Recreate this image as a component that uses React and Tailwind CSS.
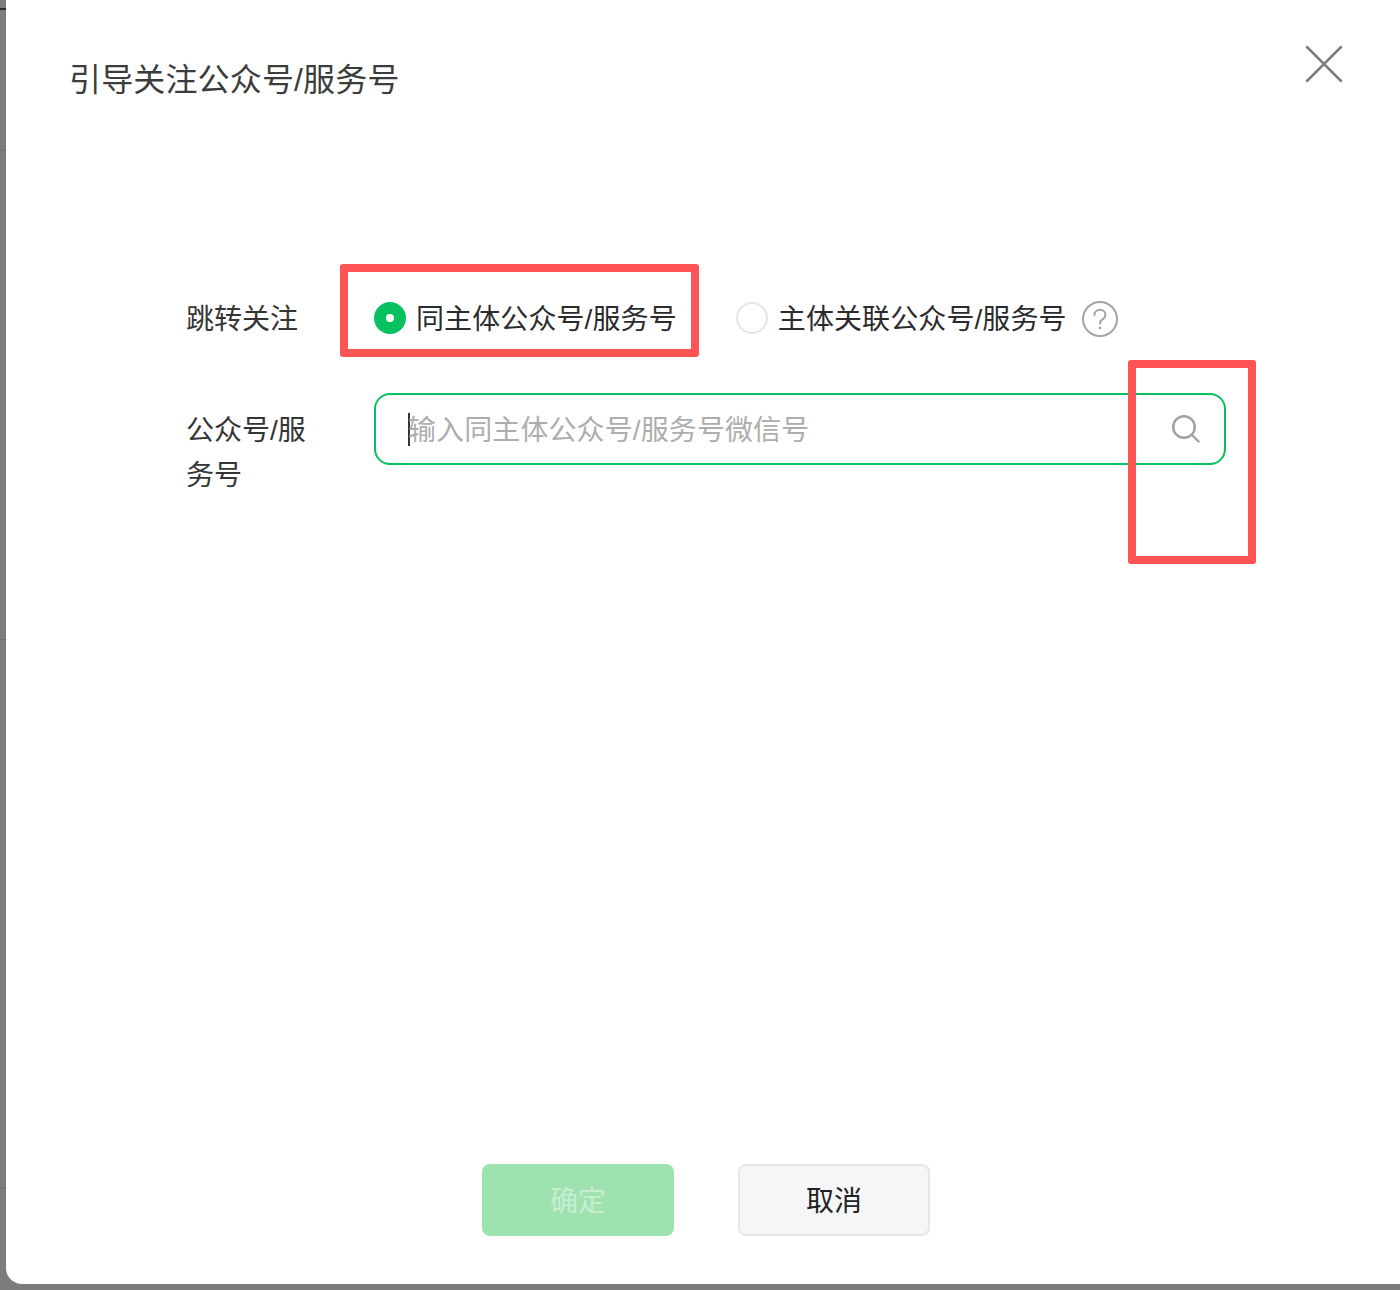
const FONT = "font-['Liberation_Sans','Noto_Sans_CJK_SC',sans-serif]";

function SearchIcon() {
  return (
    <svg className="w-7 h-7" viewBox="0 0 28 28" fill="none" stroke="#a0a0a0" strokeWidth="2.4">
      <circle cx="12" cy="12" r="10.8" />
      <path strokeLinecap="round" d="M20 20l6.500 6.500" />
    </svg>
  );
}

function HelpIcon() {
  return (
    <svg className="w-9 h-9 ml-[15px] mt-[2px]" viewBox="0 0 36 36" fill="none" stroke="#a3a3a3" strokeWidth="2">
      <circle cx="18" cy="18" r="17" />
      <path strokeLinecap="round" d="M12.5 14c0-3 2.4-5.2 5.5-5.2s5.500 2.100 5.500 4.900c0 2-1 3.200-2.800 4.500-1.900 1.300-2.700 2.400-2.700 4.300" />
      <circle cx="18" cy="27" r="1.300" fill="#a3a3a3" stroke="none" />
    </svg>
  );
}

function CloseIcon() {
  return (
    <svg className="w-[38px] h-[38px]" viewBox="0 0 38 38" fill="none" stroke="#808080" strokeWidth="2.500" strokeLinecap="round">
      <path d="M2 2l34 34M36 2L2 36" />
    </svg>
  );
}

function Radio({ checked, label }) {
  return (
    <label className="flex items-center">
      {checked ? (
        <span className="w-8 h-8 rounded-full bg-[#07c160] flex items-center justify-center">
          <span className="w-2 h-2 rounded-full bg-white" />
        </span>
      ) : (
        <span className="w-8 h-8 rounded-full border-2 border-[#e5e5e5] bg-white" />
      )}
      <span className="ml-[10px] pt-1 text-[28px] leading-[44px] tracking-[0.1px] text-[#2b2b2b]">{label}</span>
    </label>
  );
}

export default function App() {
  return (
    <div className={`${FONT} relative flex h-[1290px] w-[1400px] overflow-hidden bg-[#7c7c7c] text-[#353535]`}>
      {/* dimmed page behind the dialog */}
      <div className="flex flex-col w-[6px] shrink-0">
        <div className="h-[10px] border-b-2 border-[#2e2e2e]" />
        <div className="h-[141px] border-b border-[#6e6e6e]" />
        <div className="h-[489px] border-b border-[#6e6e6e]" />
        <div className="h-[549px] border-b border-[#6e6e6e]" />
      </div>

      <div className="flex flex-col w-[1400px] h-[1284px] shrink-0 bg-white rounded-bl-[16px]">
        <div className="flex items-start justify-between h-[264px] pl-[63px] pr-[63px]">
          <h1 className="mt-[57px] text-[32px] leading-[46px] tracking-[0.15px] font-normal text-[#3c3c3c]">引导关注公众号/服务号</h1>
          <div className="mt-[45px]">
            <CloseIcon />
          </div>
        </div>

        <div className="flex flex-col pl-[180px] pr-[174px]">
          <div className="flex items-center h-[108px]">
            <div className="w-[188px] pt-1 text-[28px] leading-[44px]">跳转关注</div>
            <Radio checked label="同主体公众号/服务号" />
            <div className="ml-[59px] flex items-center">
              <Radio label="主体关联公众号/服务号" />
              <HelpIcon />
            </div>
          </div>

          <div className="flex mt-[21px]">
            <div className="w-[188px] shrink-0 pr-[64px] pt-[15px] text-[28px] leading-[45px] break-all">公众号/服务号</div>
            <div className="flex items-center w-[852px] h-[72px] pl-[32px] pr-6 border-2 border-[#07c160] rounded-[16px]">
              <span className="w-[2px] h-[33px] bg-[#353535] shrink-0" />
              <input
                className="flex-1 min-w-0 -ml-[2px] pt-1 text-[28px] leading-[44px] tracking-[0.1px] bg-transparent outline-none placeholder:text-[#adadad]"
                placeholder="输入同主体公众号/服务号微信号"
              />
              <SearchIcon />
            </div>
          </div>
        </div>

        <div className="flex justify-center gap-16 mt-auto mb-12">
          <button className="w-[192px] h-[72px] pt-1 rounded-lg bg-[#9ee2b0] text-[28px] text-[#c8eed2]">确定</button>
          <button className="w-[192px] h-[72px] pt-1 rounded-lg bg-[#f5f6f8] border-2 border-[#e5e6e8] text-[28px] text-[#222222]">取消</button>
        </div>
      </div>

      {/* red annotation boxes drawn over the screenshot */}
      <div className="absolute left-[340px] top-[264px] w-[359px] h-[93px] border-8 border-[#fe5453] rounded-[3px]" />
      <div className="absolute left-[1128px] top-[360px] w-[128px] h-[204px] border-8 border-[#fe5453] rounded-[3px]" />
    </div>
  );
}
